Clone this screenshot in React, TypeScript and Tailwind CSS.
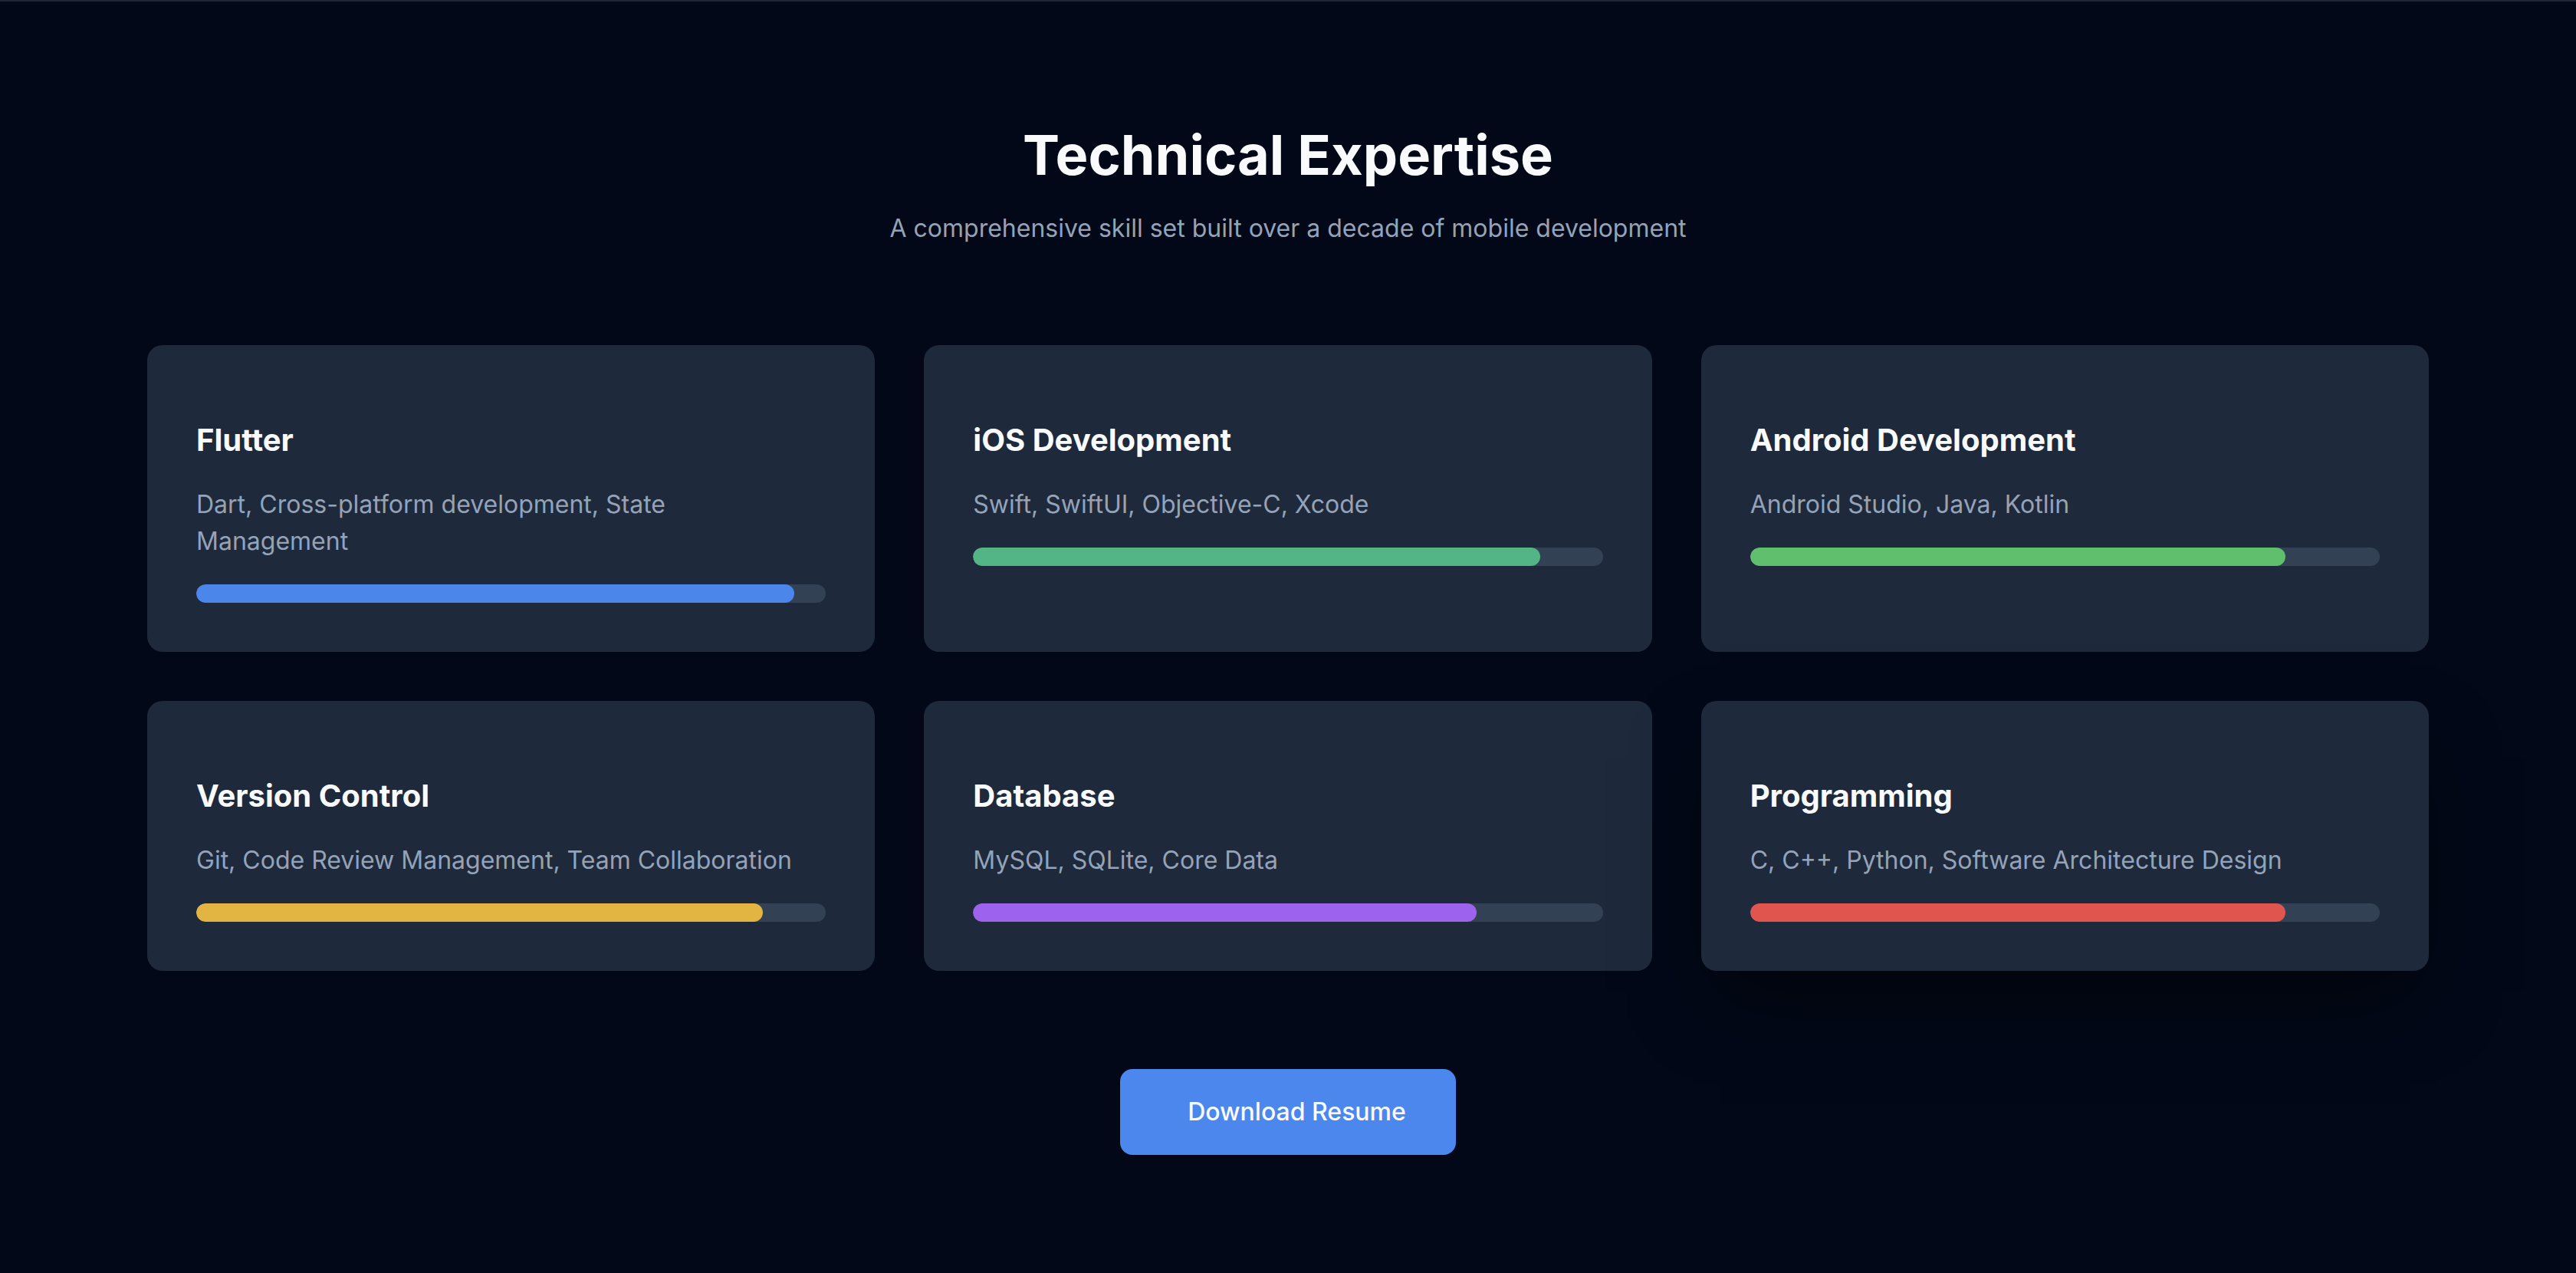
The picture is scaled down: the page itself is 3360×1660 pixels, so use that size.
const skills = [
  {
    title: "Flutter",
    text: "Dart, Cross-platform development, State Management",
    level: 95,
    color: "bg-[#4b87ea]",
  },
  {
    title: "iOS Development",
    text: "Swift, SwiftUI, Objective-C, Xcode",
    level: 90,
    color: "bg-[#53b586]",
  },
  {
    title: "Android Development",
    text: "Android Studio, Java, Kotlin",
    level: 85,
    color: "bg-[#5fbf6c]",
  },
  {
    title: "Version Control",
    text: "Git, Code Review Management, Team Collaboration",
    level: 90,
    color: "bg-[#e2b441]",
  },
  {
    title: "Database",
    text: "MySQL, SQLite, Core Data",
    level: 80,
    color: "bg-[#9d62ee]",
  },
  {
    title: "Programming",
    text: "C, C++, Python, Software Architecture Design",
    level: 85,
    color: "bg-[#e0554d]",
  },
];

function SkillCard({
  title,
  text,
  level,
  color,
  raised,
}: {
  title: string;
  text: string;
  level: number;
  color: string;
  raised?: boolean;
}) {
  return (
    <div
      className={
        raised
          ? "rounded-[20px] bg-[#1e293b] px-[64px] pt-[96px] pb-[64px] shadow-[0_50px_100px_-24px_rgba(0,0,0,0.55)]"
          : "rounded-[20px] bg-[#1e293b] px-[64px] pt-[96px] pb-[64px]"
      }
    >
      <h3 className="mb-[32px] text-[40px] leading-[56px] font-bold text-[#f8fafc]">{title}</h3>
      <p className="mb-[32px] max-w-[800px] text-[32px] leading-[48px] text-[#94a3b8]">{text}</p>
      <div className="h-[24px] w-full overflow-hidden rounded-full bg-[#334155]">
        <div className={`h-full rounded-full ${color}`} style={{ width: `${level}%` }} />
      </div>
    </div>
  );
}

export default function App() {
  return (
    <div className="min-h-screen border-t-2 border-[#1e2536] bg-[#020817] font-['Inter',sans-serif]">
      <section className="px-[192px] pt-[160px] pb-[154px]">
        <h2 className="mb-[32px] text-center text-[72px] leading-[80px] font-bold text-[#f8fafc]">
          Technical Expertise
        </h2>
        <p className="mb-[128px] text-center text-[32px] leading-[48px] text-[#94a3b8]">
          A comprehensive skill set built over a decade of mobile development
        </p>

        <div className="grid grid-cols-3 gap-[64px]">
          {skills.map((s, i) => (
            <SkillCard key={s.title} {...s} raised={i === skills.length - 1} />
          ))}
        </div>

        <div className="mt-[128px] flex justify-center">
          <button className="h-[112px] rounded-[16px] bg-[#4b87ec] pl-[88px] pr-[65px] text-[32px] leading-[48px] font-medium text-[#f8fafc]">
            Download Resume
          </button>
        </div>
      </section>
    </div>
  );
}
